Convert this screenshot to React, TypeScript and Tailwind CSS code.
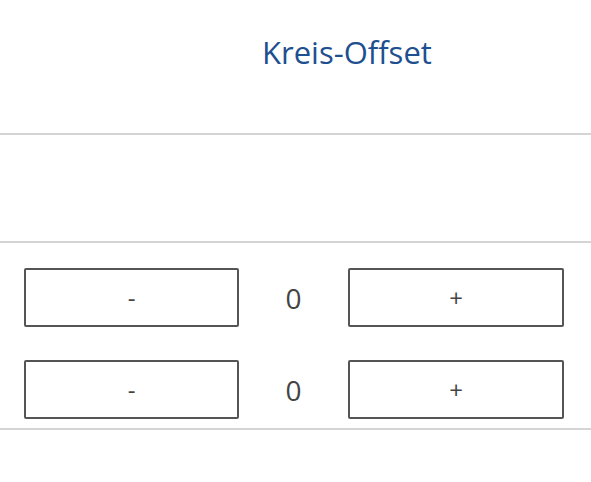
export default function App() {
  const rows = [0, 0];
  return (
    <div className="w-[591px] h-[482px] bg-white overflow-hidden" style={{ fontFamily: '"Open Sans", "Noto Sans", sans-serif' }}>
      <div className="h-[133px] pl-[262px] pt-[30px]">
        <span className="text-[31px] leading-[44px] text-[#1e4f8f]">Kreis-Offset</span>
      </div>
      <div className="h-[2px] bg-[#d4d4d4]" />
      <div className="h-[106px]" />
      <div className="h-[2px] bg-[#d4d4d4]" />
      <div className="flex flex-col gap-[33px] pt-[25px] pb-[9px] pl-[24px]">
        {rows.map((v, i) => (
          <div key={i} className="flex items-center">
            <button className="w-[215px] h-[59px] border-2 border-[#555] rounded-[2px] bg-white text-[24px] text-[#444]">-</button>
            <div className="w-[109px] text-center text-[28px] text-[#444]">{v}</div>
            <button className="w-[216px] h-[59px] border-2 border-[#555] rounded-[2px] bg-white text-[24px] text-[#444]">+</button>
          </div>
        ))}
      </div>
      <div className="h-[2px] bg-[#d4d4d4]" />
    </div>
  );
}
